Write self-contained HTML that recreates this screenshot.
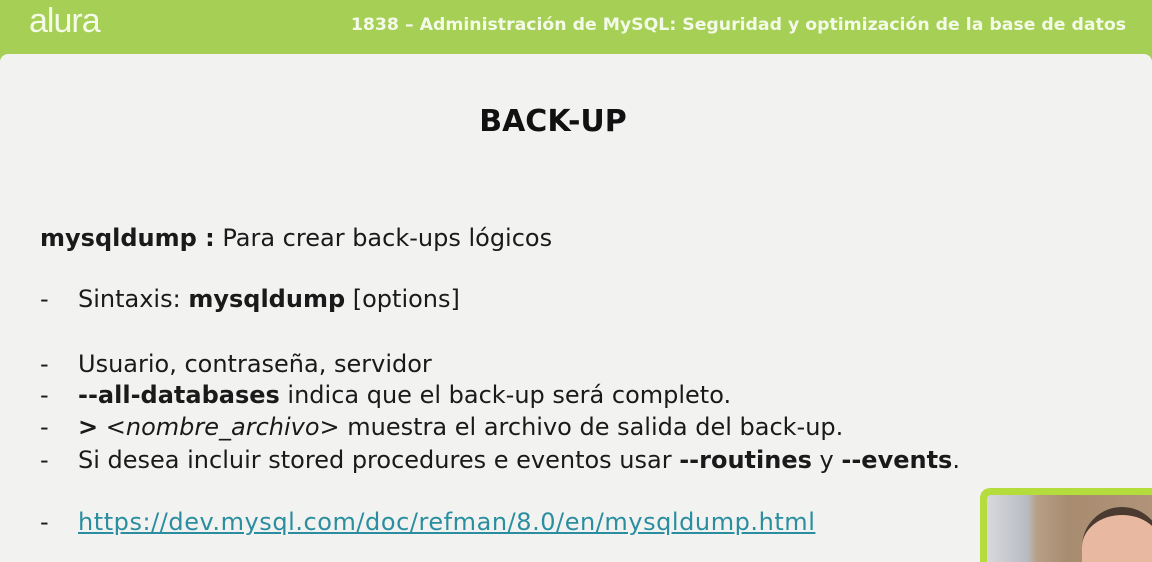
<!DOCTYPE html><html><head><style>
html,body{margin:0;width:1152px;height:562px;overflow:hidden}
body{background:#a6cf55;font-family:"DejaVu Sans",sans-serif;position:relative}
.hdr{position:absolute;left:0;top:0;width:1152px;height:54px}
.logo{position:absolute;left:29px;top:2px;font-family:"Liberation Sans",sans-serif;font-size:34px;color:#f4fae8;letter-spacing:-1px}
.ttl{position:absolute;right:26px;top:15px;font-size:17.3px;font-weight:bold;color:#f4fae8}
.card{position:absolute;left:0;top:54px;width:1152px;height:508px;background:#f2f2f1;border-radius:8px 8px 0 0}
h1{position:absolute;left:0;width:1106px;text-align:center;top:104px;margin:0;font-size:30px;font-weight:bold;color:#111}
.l{position:absolute;left:40px;font-size:24px;color:#1a1a1a;white-space:nowrap}
.l .d{display:inline-block;width:38px}
a{color:#2a8ea0;text-decoration:underline;letter-spacing:0.55px}
.cam{position:absolute;left:980px;top:488px;width:172px;height:74px;background:#b4dc3c;border-radius:10px 0 0 0;overflow:hidden}
.cam .in{position:absolute;left:7px;top:7px;right:0;bottom:0;background:linear-gradient(90deg,#d8d8dc 0,#b8bcc2 40px,#b79f86 50px,#a88c70 80px,#b09378 100%);border-radius:4px 0 0 0;overflow:hidden}
.face{position:absolute;left:95px;top:12px;width:80px;height:90px;background:#e8b8a0;border-radius:40px 40px 0 0;border-top:8px solid #4a3a30}
</style></head><body>
<div class="hdr"><div class="logo">alura</div><div class="ttl">1838 – Administración de MySQL: Seguridad y optimización de la base de datos</div></div>
<div class="card"></div>
<h1>BACK-UP</h1>
<div class="l" style="top:224px"><b>mysqldump :</b> Para crear back-ups lógicos</div>
<div class="l" style="top:285px"><span class="d">-</span>Sintaxis: <b>mysqldump</b> [options]</div>
<div class="l" style="top:350px"><span class="d">-</span>Usuario, contraseña, servidor</div>
<div class="l" style="top:381px"><span class="d">-</span><b>--all-databases</b> indica que el back-up será completo.</div>
<div class="l" style="top:413px"><span class="d">-</span><b>&gt;</b> <i>&lt;nombre_archivo&gt;</i> muestra el archivo de salida del back-up.</div>
<div class="l" style="top:446px"><span class="d">-</span>Si desea incluir stored procedures e eventos usar <b>--routines</b> y <b>--events</b>.</div>
<div class="l" style="top:508px"><span class="d">-</span><a>https://dev.mysql.com/doc/refman/8.0/en/mysqldump.html</a></div>
<div class="cam"><div class="in"><div class="face"></div></div></div>
</body></html>
